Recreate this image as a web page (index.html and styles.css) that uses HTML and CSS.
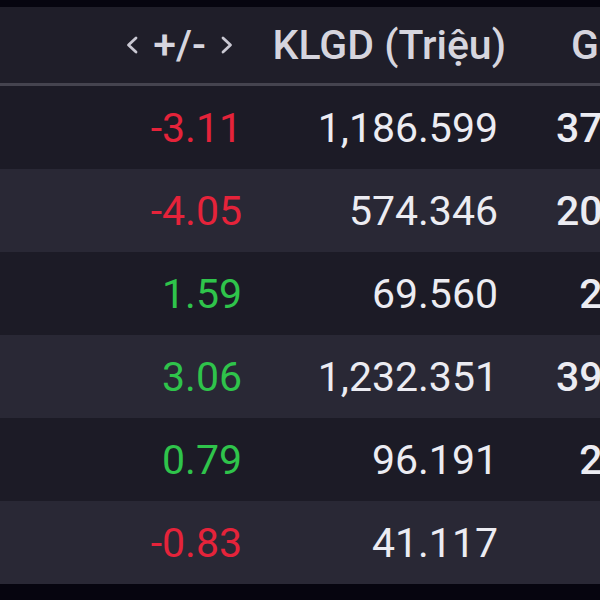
FILE: index.html
```html
<!DOCTYPE html>
<html lang="vi">
<head>
<meta charset="utf-8">
<link rel="stylesheet" href="styles.css">
</head>
<body>
<div class="board">
  <div class="head">
    <div class="hcell h1">
      <svg class="chev" width="14" height="20" viewBox="0 0 14 20"><path d="M11 3 L3.5 10 L11 17" fill="none" stroke="#c9c8d2" stroke-width="2.8" stroke-linecap="round" stroke-linejoin="round"/></svg>
      <span class="hlabel">+/-</span>
      <svg class="chev" width="14" height="20" viewBox="0 0 14 20"><path d="M3 3 L10.5 10 L3 17" fill="none" stroke="#c9c8d2" stroke-width="2.8" stroke-linecap="round" stroke-linejoin="round"/></svg>
    </div>
    <div class="hcell h2">KLGD (Triệu)</div>
    <div class="hcell h3">Giá trị (Tỷ)</div>
  </div>
  <div class="row odd"><div class="c1 down">-3.11</div><div class="c2">1,186.599</div><div class="c3">376,521</div></div>
  <div class="row even"><div class="c1 down">-4.05</div><div class="c2">574.346</div><div class="c3">208,315</div></div>
  <div class="row odd"><div class="c1 up">1.59</div><div class="c2">69.560</div><div class="c3">24,417</div></div>
  <div class="row even"><div class="c1 up">3.06</div><div class="c2">1,232.351</div><div class="c3">391,126</div></div>
  <div class="row odd"><div class="c1 up">0.79</div><div class="c2">96.191</div><div class="c3">28,851</div></div>
  <div class="row even"><div class="c1 down">-0.83</div><div class="c2">41.117</div><div class="c3">1,340</div></div>
</div>
</body>
</html>
```
FILE: styles.css
```css
html, body {
  margin: 0;
  padding: 0;
  background: #06050f;
}
body {
  width: 600px;
  height: 600px;
  overflow: hidden;
  font-family: Roboto, "Liberation Sans", sans-serif;
}
.board {
  padding-top: 7px;
  width: 600px;
  overflow: hidden;
}
.head {
  display: grid;
  grid-template-columns: 242px 256px 200px;
  height: 76px;
  background: #1f1e29;
  border-bottom: 3px solid #45444f;
  color: #d6d5de;
  font-weight: 500;
  font-size: 41px;
  align-items: center;
  width: 698px;
}
.hcell {
  white-space: nowrap;
}
.h1 {
  display: flex;
  justify-content: flex-end;
  align-items: center;
  gap: 14px;
  padding-right: 8px;
}
.h2 {
  text-align: right;
  margin-right: -8px;
}
.h3 {
  padding-left: 73px;
}
.row {
  display: grid;
  grid-template-columns: 242px 256px 207px;
  height: 83px;
  align-items: center;
  font-size: 41px;
  color: #ececf2;
  width: 705px;
  white-space: nowrap;
}
.odd { background: #1c1b26; }
.even { background: #292835; }
.c1, .c2, .c3 { text-align: right; }
.c3 { font-weight: 500; }
.down { color: #e5233a; }
.up { color: #2fc44b; }
```
